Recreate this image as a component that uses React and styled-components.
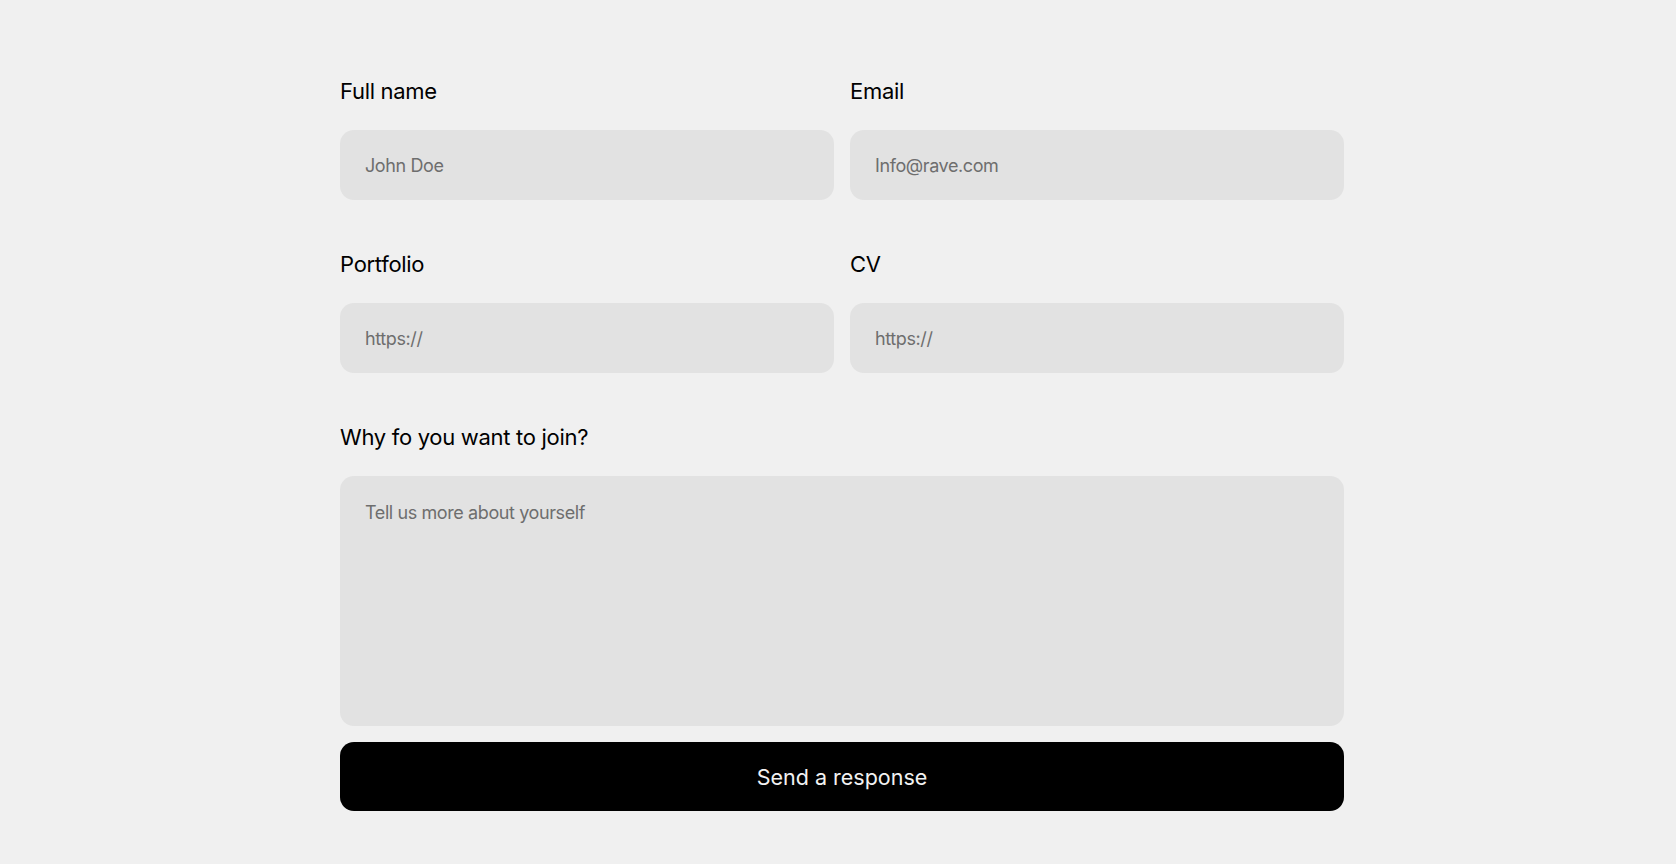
import React from "react";
import styled, { createGlobalStyle } from "styled-components";

const Global = createGlobalStyle`
  html, body { margin: 0; padding: 0; background: #f0f0f0; }
  body { font-family: Inter, "Noto Sans", sans-serif; -webkit-font-smoothing: antialiased; }
  * { box-sizing: border-box; }
`;

const Page = styled.div`
  min-height: 864px;
  padding: 78px 0 0 8px;
  display: flex;
  justify-content: center;
  align-items: flex-start;
`;

const Form = styled.form`
  width: 1004px;
  display: grid;
  grid-template-columns: 1fr 1fr;
  align-content: start;
  column-gap: 16px;
  row-gap: 51px;
`;

const Field = styled.div`
  display: flex;
  flex-direction: column;
  grid-column: ${(p) => (p.$wide ? "1 / -1" : "auto")};
`;

const Label = styled.label`
  font-size: 22px;
  line-height: 27px;
  letter-spacing: -0.3px;
  color: #000;
  margin-bottom: 25px;
  font-weight: 400;
`;

const Input = styled.input`
  height: 70px;
  border: none;
  outline: none;
  border-radius: 14px;
  background: #e2e2e2;
  padding: 0 25px;
  font-family: inherit;
  font-size: 18px;
  letter-spacing: -0.4px;
  color: #222;
  &::placeholder { color: #6e6e6e; }
`;

const Area = styled.textarea`
  height: 250px;
  border: none;
  outline: none;
  resize: none;
  border-radius: 14px;
  background: #e2e2e2;
  padding: 26px 25px;
  font-family: inherit;
  font-size: 18px;
  line-height: 22px;
  letter-spacing: -0.4px;
  color: #222;
  &::placeholder { color: #6e6e6e; }
`;

const Bottom = styled.div`
  grid-column: 1 / -1;
  display: flex;
  flex-direction: column;
  gap: 16px;
`;

const Button = styled.button`
  height: 69px;
  border: none;
  border-radius: 14px;
  background: #000;
  color: #f2f2f2;
  font-family: inherit;
  font-size: 21.5px;
  cursor: pointer;
`;

export default function App() {
  return (
    <>
      <Global />
      <Page>
        <Form onSubmit={(e) => e.preventDefault()}>
          <Field>
            <Label>Full name</Label>
            <Input placeholder="John Doe" />
          </Field>
          <Field>
            <Label>Email</Label>
            <Input placeholder="Info@rave.com" />
          </Field>
          <Field>
            <Label>Portfolio</Label>
            <Input placeholder="https://" />
          </Field>
          <Field>
            <Label>CV</Label>
            <Input placeholder="https://" />
          </Field>
          <Bottom>
            <Field $wide>
              <Label>Why fo you want to join?</Label>
              <Area placeholder="Tell us more about yourself" />
            </Field>
            <Button type="submit">Send a response</Button>
          </Bottom>
        </Form>
      </Page>
    </>
  );
}
